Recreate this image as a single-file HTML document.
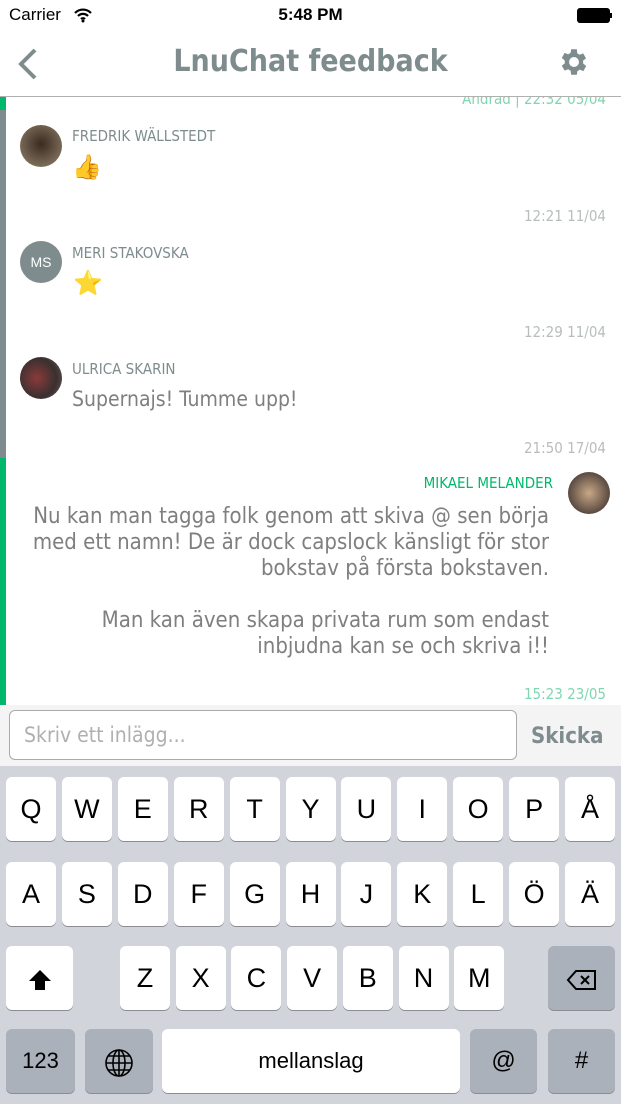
<!DOCTYPE html>
<html><head><meta charset="utf-8"><style>
*{margin:0;padding:0;box-sizing:border-box}
body{width:621px;height:1104px;position:relative;overflow:hidden;background:#fff;font-family:"Liberation Sans","DejaVu Sans",sans-serif}
.a{position:absolute}
.chat{font-family:"DejaVu Sans Condensed","DejaVu Sans",sans-serif}
.name{font-size:15px;color:#7f8c8d}
.time{font-size:15px;color:#b8bdbd;right:15px}
.key{position:absolute;background:#fff;border-radius:6px;box-shadow:0 1px 0 #8a8d92;font-size:27px;text-align:center;line-height:64px;height:64px;color:#000}
.dk{background:#abb1ba}
.av{position:absolute;width:42px;height:42px;border-radius:50%}
</style></head><body>
<div class="a" style="left:9px;top:5px;font-size:17px">Carrier</div>
<svg class="a" style="left:73px;top:7px" width="20" height="16" viewBox="0 0 20 16"><path d="M2 6a11 11 0 0 1 16 0M5 9a7 7 0 0 1 10 0M8 12a3 3 0 0 1 4 0" stroke="#000" stroke-width="2.2" fill="none"/><circle cx="10" cy="14" r="1.5"/></svg>
<div class="a" style="left:0;width:621px;top:5px;text-align:center;font-size:17px;font-weight:bold">5:48 PM</div>
<div class="a" style="left:577px;top:8px;width:33px;height:15px;background:#000;border-radius:3px"></div>
<div class="a" style="left:610px;top:13px;width:2px;height:5px;background:#000"></div>
<svg class="a" style="left:16px;top:47px" width="22" height="34"><path d="M19 3L5 17l14 14" stroke="#7f8c8d" stroke-width="4" fill="none"/></svg>
<div class="a chat" style="left:0;width:621px;top:44px;text-align:center;font-size:30px;font-weight:bold;color:#7f8c8d">LnuChat feedback</div>
<svg class="a" style="left:557px;top:45px" width="34" height="34" viewBox="0 0 24 24"><path fill="#7f8c8d" d="M19.4 13a7.5 7.5 0 0 0 0-2l2.1-1.6-2-3.5-2.5 1a7.6 7.6 0 0 0-1.7-1L15 3h-4l-.4 2.6a7.6 7.6 0 0 0-1.7 1l-2.5-1-2 3.5L6.5 11a7.5 7.5 0 0 0 0 2l-2.1 1.6 2 3.5 2.5-1c.5.4 1.1.8 1.7 1L11 21h4l.4-2.6c.6-.2 1.2-.6 1.7-1l2.5 1 2-3.5zM13 15.5a3.5 3.5 0 1 1 0-7 3.5 3.5 0 0 1 0 7z" transform="translate(-1 0)"/></svg>
<div class="a" style="left:0;top:96px;width:621px;height:1px;background:#b0b0b0"></div>
<div class="a" style="left:0;top:97px;width:6px;height:13px;background:#00b86b"></div>
<div class="a" style="left:0;top:110px;width:6px;height:348px;background:#7f8c8d"></div>
<div class="a" style="left:0;top:458px;width:6px;height:247px;background:#00b86b"></div>
<div class="a chat" style="right:15px;top:97px;font-size:15px;color:#7fd6b0;height:11px;overflow:hidden;line-height:16px"><span style="position:relative;top:-6px">Ändrad | 22:32 05/04</span></div>
<div class="av" style="left:20px;top:125px;background:radial-gradient(circle at 50% 45%,#3a2a20,#7a6a58 70%,#a89880)"></div>
<div class="a chat name" style="left:72px;top:127px">FREDRIK WÄLLSTEDT</div>
<div class="a" style="left:72px;top:153px;font-size:24px">👍</div>
<div class="a chat time" style="top:207px">12:21 11/04</div>
<div class="av" style="left:20px;top:241px;background:#7f8c8d;color:#fff;font-size:14px;text-align:center;line-height:42px">MS</div>
<div class="a chat name" style="left:72px;top:244px">MERI STAKOVSKA</div>
<div class="a" style="left:73px;top:269px;font-size:24px">⭐</div>
<div class="a chat time" style="top:323px">12:29 11/04</div>
<div class="av" style="left:20px;top:357px;background:radial-gradient(circle at 40% 50%,#8a3a3a,#3a3030 60%,#706060)"></div>
<div class="a chat name" style="left:72px;top:360px">ULRICA SKARIN</div>
<div class="a chat" style="left:72px;top:387px;font-size:21px;color:#7f7f7f">Supernajs! Tumme upp!</div>
<div class="a chat time" style="top:439px">21:50 17/04</div>
<div class="a chat" style="right:68px;top:474px;font-size:15px;color:#00b86b">MIKAEL MELANDER</div>
<div class="av" style="left:568px;top:472px;background:radial-gradient(circle at 50% 50%,#c8a888,#5a4a40 70%,#d8c8a0)"></div>
<div class="a chat" style="right:72px;top:504px;font-size:22px;line-height:26px;color:#7f7f7f;text-align:right;white-space:nowrap">Nu kan man tagga folk genom att skiva @ sen börja<br>med ett namn! De är dock capslock känsligt för stor<br>bokstav på första bokstaven.<br><br>Man kan även skapa privata rum som endast<br>inbjudna kan se och skriva i!!</div>
<div class="a chat time" style="top:685px;color:#7fd6b0">15:23 23/05</div>
<div class="a" style="left:0;top:705px;width:621px;height:61px;background:#f4f4f4"></div>
<div class="a chat" style="left:9px;top:710px;width:508px;height:50px;border:1px solid #aaa;border-radius:6px;background:#fff;padding-left:14px;line-height:48px;font-size:21px;color:#b0b0b0">Skriv ett inlägg...</div>
<div class="a chat" style="left:531px;top:724px;font-size:22px;font-weight:bold;color:#7f8c8d">Skicka</div>
<div class="a" style="left:0;top:766px;width:621px;height:338px;background:#d1d5db"></div>
<div id="kb"></div>
<script>
var kb=document.getElementById('kb'),h='';
function k(x,y,w,t,c,fs){h+='<div class="key '+(c||'')+'" style="left:'+x+'px;top:'+y+'px;width:'+w+'px;'+(fs?'font-size:'+fs+'px':'')+'">'+t+'</div>';}
'QWERTYUIOPÅ'.split('').forEach(function(c,i){k(6+i*55.9,777,50,c)});
'ASDFGHJKLÖÄ'.split('').forEach(function(c,i){k(6+i*55.9,862,50,c)});
'ZXCVBNM'.split('').forEach(function(c,i){k(120+i*55.7,946,50,c)});
k(6,946,67,'<svg width="26" height="24" style="vertical-align:middle"><path d="M13 2L2 13h6v9h10v-9h6z" fill="#000"/></svg>');
k(548,946,67,'<svg width="32" height="24" style="vertical-align:middle"><path d="M10 3h19v18H10L2 12z" fill="none" stroke="#000" stroke-width="2"/><path d="M15 8l8 8M23 8l-8 8" stroke="#000" stroke-width="2"/></svg>','dk');
k(6,1029,69,'123','dk',22);
k(85,1029,68,'<svg width="30" height="30" style="vertical-align:middle" viewBox="0 0 30 30" fill="none" stroke="#000" stroke-width="1.6"><circle cx="15" cy="15" r="13"/><ellipse cx="15" cy="15" rx="6" ry="13"/><path d="M2 15h26M4 8h22M4 22h22M15 2v26"/></svg>','dk');
k(162,1029,298,'mellanslag','',22);
k(470,1029,67,'@','dk',24);
k(548,1029,67,'#','dk',24);
kb.innerHTML=h;
</script>
</body></html>
